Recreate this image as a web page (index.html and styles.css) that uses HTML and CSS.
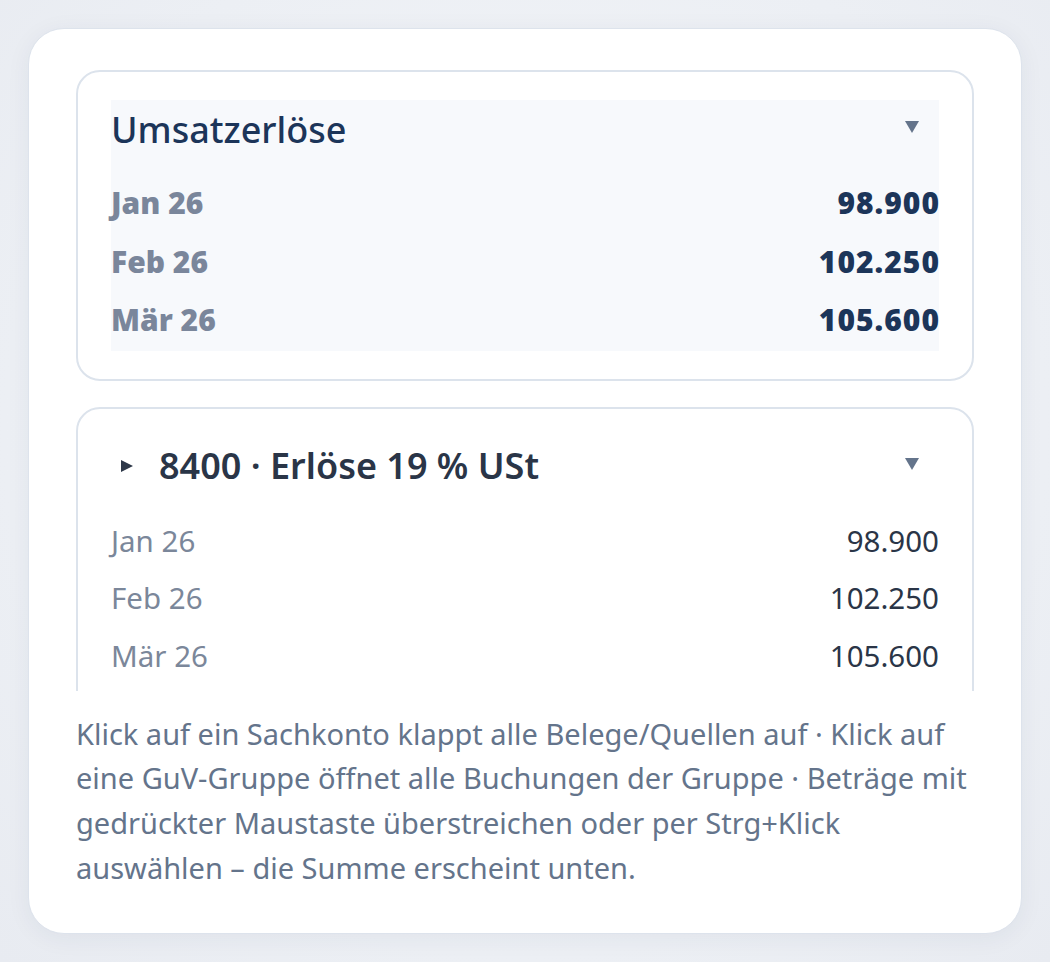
FILE: index.html
```html
<!DOCTYPE html>
<html lang="de">
<head>
<meta charset="utf-8">
<title>GuV</title>
<link rel="stylesheet" href="styles.css">
</head>
<body>
<div class="panel">
  <section class="card">
    <div class="group">
      <div class="head">
        <h2 class="title">Umsatzerlöse</h2>
        <svg class="caret" width="14" height="12" viewBox="0 0 14 12"><polygon points="0,0 14,0 7,12" fill="#64748b"/></svg>
      </div>
      <div class="row strong"><span class="lbl">Jan 26</span><span class="val">98.900</span></div>
      <div class="row strong"><span class="lbl">Feb 26</span><span class="val">102.250</span></div>
      <div class="row strong"><span class="lbl">Mär 26</span><span class="val">105.600</span></div>
    </div>
  </section>
  <div class="clip">
    <section class="card card2">
      <div class="group plain">
        <div class="head">
          <h3 class="acct"><svg class="tri" width="12" height="12" viewBox="0 0 12 12"><polygon points="0,0 12,6 0,12" fill="#2d3748"/></svg>8400 · Erlöse 19 % USt</h3>
          <svg class="caret" width="14" height="12" viewBox="0 0 14 12"><polygon points="0,0 14,0 7,12" fill="#64748b"/></svg>
        </div>
        <div class="row"><span class="lbl">Jan 26</span><span class="val">98.900</span></div>
        <div class="row"><span class="lbl">Feb 26</span><span class="val">102.250</span></div>
        <div class="row"><span class="lbl">Mär 26</span><span class="val">105.600</span></div>
      </div>
    </section>
  </div>
  <p class="hint">Klick auf ein Sachkonto klappt alle Belege/Quellen auf · Klick auf eine GuV-Gruppe öffnet alle Buchungen der Gruppe · Beträge mit gedrückter Maustaste überstreichen oder per Strg+Klick auswählen – die Summe erscheint unten.</p>
</div>
</body>
</html>
```

FILE: styles.css
```css
html, body {
  margin: 0;
  padding: 0;
}
body {
  width: 1050px;
  height: 962px;
  overflow: hidden;
  background: radial-gradient(ellipse at 50% 45%, #f4f6f9 0%, #eceff4 70%, #e8ebf1 100%);
  font-family: "Noto Sans", "Open Sans", sans-serif;
  padding: 28px;
  box-sizing: border-box;
}
.panel {
  width: 994px;
  height: 906px;
  box-sizing: border-box;
  background: #ffffff;
  border: 1px solid #dde3ec;
  border-radius: 36px;
  box-shadow: 0 4px 24px rgba(30, 50, 90, 0.06);
  padding: 41px 47px 0 47px;
  display: flex;
  flex-direction: column;
}
.card {
  border: 2px solid #dce3ec;
  border-radius: 24px;
  padding: 28px 33px;
  background: #fff;
}
.group {
  background: #f7f9fc;
}
.group.plain {
  background: transparent;
}
.head {
  height: 75px;
  display: flex;
  justify-content: space-between;
  align-items: flex-start;
}
.title {
  margin: 0;
  font-size: 36px;
  line-height: 60px;
  font-weight: 500;
  color: #1c3559;
}
.caret {
  margin-top: 21px;
  margin-right: 20px;
}
.row {
  height: 58.5px;
  display: flex;
  justify-content: space-between;
  align-items: center;
  font-size: 29.5px;
}
.row .lbl {
  color: #7b879a;
}
.row .val {
  color: #2a3547;
}
.row.strong {
  font-size: 30px;
  padding-bottom: 3px;
  box-sizing: border-box;
}
.row.strong .lbl {
  font-weight: 900;
  color: #7a869b;
}
.row.strong .val {
  font-weight: 900;
  color: #1c3559;
  letter-spacing: 1px;
  margin-right: -1px;
}
.clip {
  margin-top: 26px;
  height: 284px;
  overflow: hidden;
  flex: none;
}
.card2 {
  height: 400px;
  box-sizing: border-box;
}
.acct {
  margin: 0;
  font-size: 36px;
  line-height: 58px;
  font-weight: 600;
  color: #2a3547;
  display: flex;
  align-items: center;
}
.tri {
  margin-left: 10px;
  margin-right: 26px;
}
.card2 .row {
  height: 57.5px;
}
.hint {
  margin: 21px 0 0 0;
  font-size: 29px;
  line-height: 44.7px;
  color: #64748b;
}
```
